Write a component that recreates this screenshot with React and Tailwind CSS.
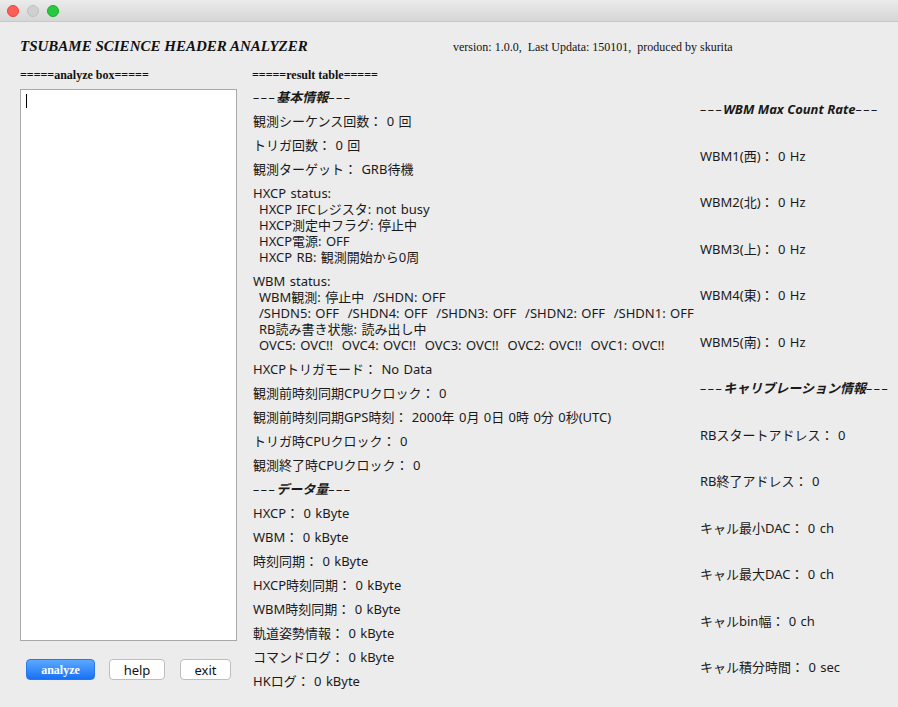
export default function App() {
  const sans = { fontFamily: '"Noto Sans", "Noto Sans CJK JP", sans-serif' };
  const basic = [
    ["基本情報", true],
    ["観測シーケンス回数： 0 回"],
    ["トリガ回数： 0 回"],
    ["観測ターゲット： GRB待機"],
  ];
  const hxcp = [
    ["HXCP status:"],
    ["HXCP IFCレジスタ: not busy", 1],
    ["HXCP測定中フラグ: 停止中", 1],
    ["HXCP電源: OFF", 1],
    ["HXCP RB: 観測開始から0周", 1],
  ];
  const wbm = [
    ["WBM status:"],
    ["WBM観測: 停止中  /SHDN: OFF", 1],
    ["/SHDN5: OFF  /SHDN4: OFF  /SHDN3: OFF  /SHDN2: OFF  /SHDN1: OFF", 1],
    ["RB読み書き状態: 読み出し中", 1],
    ["OVC5: OVC!!  OVC4: OVC!!  OVC3: OVC!!  OVC2: OVC!!  OVC1: OVC!!", 1],
  ];
  const rest = [
    ["HXCPトリガモード： No Data"],
    ["観測前時刻同期CPUクロック： 0"],
    ["観測前時刻同期GPS時刻： 2000年 0月 0日 0時 0分 0秒(UTC)"],
    ["トリガ時CPUクロック： 0"],
    ["観測終了時CPUクロック： 0"],
    ["データ量", true],
    ["HXCP： 0 kByte"],
    ["WBM： 0 kByte"],
    ["時刻同期： 0 kByte"],
    ["HXCP時刻同期： 0 kByte"],
    ["WBM時刻同期： 0 kByte"],
    ["軌道姿勢情報： 0 kByte"],
    ["コマンドログ： 0 kByte"],
    ["HKログ： 0 kByte"],
  ];
  const right = [
    ["WBM Max Count Rate", true],
    ["WBM1(西)： 0 Hz"],
    ["WBM2(北)： 0 Hz"],
    ["WBM3(上)： 0 Hz"],
    ["WBM4(東)： 0 Hz"],
    ["WBM5(南)： 0 Hz"],
    ["キャリブレーション情報", true],
    ["RBスタートアドレス： 0"],
    ["RB終了アドレス： 0"],
    ["キャル最小DAC： 0 ch"],
    ["キャル最大DAC： 0 ch"],
    ["キャルbin幅： 0 ch"],
    ["キャル積分時間： 0 sec"],
  ];
  const Line = ({ t, h, ind }) =>
    h ? (
      <div className="h-[16px] leading-[16px] whitespace-pre font-bold italic">
        <span className="tracking-[1.5px] font-normal">–––</span>
        {t}
        <span className="tracking-[1.5px] font-normal">–––</span>
      </div>
    ) : (
      <div className={`h-[16px] leading-[16px] whitespace-pre [word-spacing:1px] ${ind ? "pl-[6px]" : ""}`}>{t}</div>
    );
  return (
    <div className="w-[898px] h-[707px] bg-[#ececec] overflow-hidden flex flex-col text-[#111]">
      <div className="h-[22px] shrink-0 border-b border-[#c8c8c8] bg-gradient-to-b from-[#ebebeb] to-[#d6d6d6] flex items-center gap-[8px] pl-[7px]">
        <div className="w-[12px] h-[12px] rounded-full bg-[#fc5f57] border border-[#e2463f]" />
        <div className="w-[12px] h-[12px] rounded-full bg-[#d0d0d0] border border-[#c0c0c0]" />
        <div className="w-[12px] h-[12px] rounded-full bg-[#28c940] border border-[#1aab29]" />
      </div>
      <div className="flex items-end pl-[20px] mt-[16px] h-[17px]" style={{ fontFamily: '"Liberation Serif", serif' }}>
        <div className="w-[433px] text-[15px] font-bold italic leading-[17px]">TSUBAME SCIENCE HEADER ANALYZER</div>
        <div className="text-[12px] leading-[15px] whitespace-pre">version: 1.0.0,  Last Updata: 150101,  produced by skurita</div>
      </div>
      <div className="flex pl-[20px] mt-[13px] text-[12px] font-bold leading-[14px]" style={{ fontFamily: '"Liberation Serif", serif' }}>
        <div className="w-[232px]">=====analyze box=====</div>
        <div>=====result table=====</div>
      </div>
      <div className="flex pl-[20px] mt-[7px]">
        <div className="w-[217px] flex flex-col">
          <div className="h-[552px] bg-white border border-[#a9a9a9] pl-[5px] pt-[4px]">
            <div className="w-[1px] h-[14px] bg-black" />
          </div>
          <div className="flex items-center mt-[18px] pl-[6px]">
            <button
              className="w-[69px] h-[21px] rounded-[4px] bg-gradient-to-b from-[#5aa8ff] to-[#1671f5] border border-[#2a78e8] text-white text-[12px] font-bold leading-[18px]"
              style={{ fontFamily: '"Liberation Serif", serif' }}
            >
              analyze
            </button>
            <button className="ml-[14px] w-[56px] h-[21px] rounded-[4px] bg-white border border-[#bdbdbd] text-[13px] leading-[18px]" style={sans}>
              help
            </button>
            <button className="ml-[15px] w-[51px] h-[21px] rounded-[4px] bg-white border border-[#bdbdbd] text-[13px] leading-[18px]" style={sans}>
              exit
            </button>
          </div>
        </div>
        <div className="ml-[16px] w-[447px] flex flex-col gap-[8px] text-[13px] text-[#1a1a1a]" style={sans}>
          {basic.map(([t, h], i) => (
            <Line key={i} t={t} h={h} />
          ))}
          <div>
            {hxcp.map(([t, ind], i) => (
              <Line key={i} t={t} ind={ind} />
            ))}
          </div>
          <div>
            {wbm.map(([t, ind], i) => (
              <Line key={i} t={t} ind={ind} />
            ))}
          </div>
          {rest.map(([t, h], i) => (
            <Line key={i} t={t} h={h} />
          ))}
        </div>
        <div className="h-[574px] mt-[12px] flex flex-col justify-between text-[13px] text-[#1a1a1a]" style={sans}>
          {right.map(([t, h], i) => (
            <Line key={i} t={t} h={h} />
          ))}
        </div>
      </div>
    </div>
  );
}
